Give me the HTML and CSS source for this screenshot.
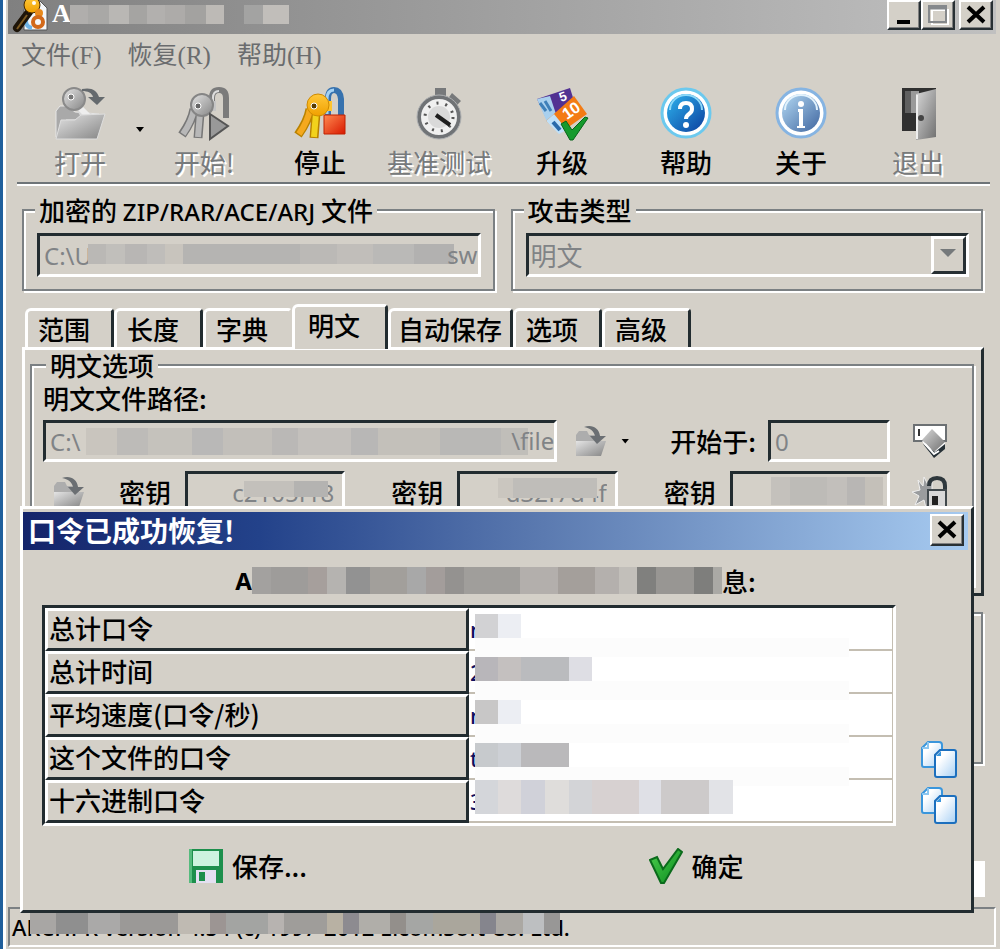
FILE: index.html
```html
<!DOCTYPE html>
<html lang="zh-CN">
<head>
    <meta charset="UTF-8">
    <meta name="viewport" content="width=device-width, initial-scale=1.0">
    <link rel="stylesheet" href="styles.css">
    <title>口令已成功恢复!</title>
</head>
<body>

<!-- shared icons and gradients -->
<svg class="defs" width="0" height="0" aria-hidden="true">
    <defs>
        <linearGradient id="grey" x1="0" y1="0" x2="1" y2="1"><stop offset="0" stop-color="#e4e4e4"/><stop offset="1" stop-color="#858585"/></linearGradient>
        <linearGradient id="gold" x1="0" y1="0" x2="0" y2="1"><stop offset="0" stop-color="#ffc83a"/><stop offset="1" stop-color="#f0a000"/></linearGradient>
        <linearGradient id="red" x1="0" y1="0" x2="1" y2="1"><stop offset="0" stop-color="#ff8a50"/><stop offset="1" stop-color="#d81800"/></linearGradient>
        <linearGradient id="help" x1="0" y1="0" x2="1" y2="1"><stop offset="0" stop-color="#2fb4ee"/><stop offset="1" stop-color="#0b3f9e"/></linearGradient>
        <linearGradient id="about" x1="0" y1="0" x2="1" y2="1"><stop offset="0" stop-color="#b4daf4"/><stop offset="1" stop-color="#3f659f"/></linearGradient>
        <linearGradient id="sheet" x1="0" y1="0" x2="1" y2="1"><stop offset="0.3" stop-color="#ffffff"/><stop offset="1" stop-color="#a8d0f4"/></linearGradient>
        <linearGradient id="door" x1="0" y1="0" x2="1" y2="1"><stop offset="0" stop-color="#d8d8d8"/><stop offset="1" stop-color="#707070"/></linearGradient>
        <linearGradient id="green" x1="0" y1="0" x2="1" y2="1"><stop offset="0" stop-color="#4cd04c"/><stop offset="1" stop-color="#0a8a20"/></linearGradient>
        <symbol id="folder" viewBox="0 0 32 32">
            <path d="M1 10l3-4h8l2 4h11v6H8L2 29H1z" fill="#adadad"/>
            <path d="M1 16h30l-5 15H1z" fill="url(#grey)"/>
            <path d="M9 2c8-3 15 1 16 9h6l-9 8-7-8h5c-1-5-5-8-11-9z" fill="#6b6f73"/>
        </symbol>
        <symbol id="copy" viewBox="0 0 38 38">
            <path d="M8 2h11q3 0 3 3v20q0 2-2 2H4q-2 0-2-2V8z" fill="url(#sheet)" stroke="#3a96dc" stroke-width="2"/>
            <path d="M8 2v6H2" fill="none" stroke="#8cc6f0" stroke-width="2"/>
            <path d="M20 10h14q2 0 2 2v23q0 2-2 2H17q-2 0-2-2V15z" fill="url(#sheet)" stroke="#1c6fbe" stroke-width="2"/>
            <path d="M21 11v5h-5z" fill="#3a96dc"/>
        </symbol>
    </defs>
</svg>

<div class="window">
    <div class="titlebar">
        <svg class="app-icon" width="36" height="34" viewBox="0 0 36 34">
            <path d="M16 1h12l7 7v22H12V10z" fill="#f4f7fa" stroke="#555" stroke-width="1"/>
            <path d="M15 17c-2 5-1 10 5 11" fill="none" stroke="#6fb4e6" stroke-width="4"/>
            <path d="M17 12L5 28" stroke="#1d1408" stroke-width="8" stroke-linecap="round"/>
            <path d="M15 15L5 29" stroke="#7c5a22" stroke-width="2"/>
            <circle cx="20" cy="5" r="8" fill="url(#gold)" stroke="#4a2c00"/>
            <circle cx="22" cy="3" r="2" fill="#fff"/>
            <circle cx="27" cy="13" r="4" fill="#e88a1c"/>
            <circle cx="26" cy="22" r="5" fill="none" stroke="#d2691a" stroke-width="4"/>
        </svg>
        <span class="app-name">A</span>
        <span class="mosaic mosaic-title"></span>
        <span class="mosaic mosaic-title-end"></span>
        <div class="window-buttons">
            <button class="win-btn" aria-label="最小化"><svg width="24" height="20" viewBox="0 0 24 20"><path d="M5 15h13v4H5z"/></svg></button>
            <button class="win-btn" aria-label="最大化" disabled><svg width="24" height="20" viewBox="0 0 24 20"><path d="M4 3h16v15H4z" fill="none" stroke="#fff" stroke-width="2" transform="translate(2 2)"/><path d="M3 1h17v16H3z" fill="none" stroke="#85888b" stroke-width="2"/><path d="M2 3h19" stroke="#85888b" stroke-width="3"/></svg></button>
            <button class="win-btn close" aria-label="关闭"><svg width="24" height="20" viewBox="0 0 24 20"><path d="M4 2l16 15M20 2L4 17" stroke="#000" stroke-width="4"/></svg></button>
        </div>
    </div>

    <nav class="menu">
        <a href="#">文件(F)</a>
        <a href="#">恢复(R)</a>
        <a href="#">帮助(H)</a>
    </nav>

    <div class="toolbar">
        <button class="tool" disabled>
            <svg width="52" height="54" viewBox="0 0 52 54">
                <path d="M2 24l4-5h7l8 6 24 2v6H12L4 50H2z" fill="#a9a9a9" stroke="#e6e6e6"/>
                <path d="M20 18l20 14h-12z" fill="#d8d8d8"/>
                <path d="M24 19l14 14" stroke="#eee" stroke-width="6"/>
                <path d="M7 33h14l6-5 24-1-8 25H2z" fill="url(#grey)" stroke="#dedede"/>
                <circle cx="20" cy="12" r="11" fill="url(#grey)" stroke="#8a8a8a" stroke-width="2"/>
                <circle cx="17" cy="10" r="3" fill="#777" stroke="#fff"/>
                <path d="M28 2c9-2 15 1 17 8h6l-8 8-9-8h5c-1-4-5-6-11-6z" fill="#656a6e"/>
            </svg>
            <span>打开</span>
        </button>
        <button class="drop" aria-label="打开列表"></button>
        <button class="tool" disabled>
            <svg width="52" height="54" viewBox="0 0 52 54">
                <path d="M34 22V11q0-8 7-8t7 8v20" fill="none" stroke="#7b7b7b" stroke-width="6"/>
                <path d="M35 22V11q0-7 6-7" fill="none" stroke="#ddd" stroke-width="2"/>
                <path d="M16 22q-2 12-12 26M22 26l-2 25" fill="none" stroke="#777" stroke-width="9"/>
                <path d="M16 22q-2 12-11 25M22 26l-2 24" fill="none" stroke="#b8b8b8" stroke-width="6"/>
                <path d="M24 14h14v10H24z" fill="#c5c5c5"/>
                <circle cx="24" cy="18" r="11" fill="url(#grey)" stroke="#858585" stroke-width="2"/>
                <circle cx="20" cy="19" r="3" fill="#666" stroke="#fff"/>
                <path d="M32 27l18 12-18 13z" fill="#999" stroke="#555" stroke-width="2"/>
            </svg>
            <span>开始!</span>
        </button>
        <button class="tool">
            <svg width="52" height="54" viewBox="0 0 52 54">
                <path d="M34 30V12q0-9 6-9t7 9v18" fill="none" stroke="#3772ae" stroke-width="6"/>
                <path d="M33 27V12q0-9 7-9" fill="none" stroke="#a5d2f4" stroke-width="3"/>
                <path d="M16 22q-2 12-12 26M22 26l-2 25" fill="none" stroke="#b98200" stroke-width="9"/>
                <path d="M16 22q-2 12-11 25" fill="none" stroke="#f5a91e" stroke-width="6"/>
                <path d="M22 26l-2 24" stroke="#f2d21c" stroke-width="6"/>
                <path d="M24 14h14v10H24z" fill="#ffc530"/>
                <circle cx="24" cy="18" r="11" fill="url(#gold)" stroke="#cf8a00"/>
                <circle cx="20" cy="19" r="3" fill="#5a3c00" stroke="#fff"/>
                <path d="M30 28h21v19H30z" fill="url(#red)" stroke="#c02000" stroke-width="1"/>
            </svg>
            <span>停止</span>
        </button>
        <button class="tool" disabled>
            <svg width="52" height="54" viewBox="0 0 52 54">
                <path d="M22 1h11v8H22zM39 6l9 8-6 6-8-7z" fill="#77797b"/>
                <circle cx="26" cy="30" r="20" fill="#f0f0f0" stroke="#707376" stroke-width="4"/>
                <circle cx="26" cy="30" r="22" fill="none" stroke="#aeb0b2" stroke-width="1"/>
                <circle cx="26" cy="30" r="14" fill="none" stroke="#555" stroke-width="3" stroke-dasharray="2 7"/>
                <circle cx="26" cy="30" r="11" fill="#d9d9d9"/>
                <path d="M23 28l14 10" stroke="#1e1e1e" stroke-width="4"/>
            </svg>
            <span>基准测试</span>
        </button>
        <button class="tool">
            <svg width="54" height="54" viewBox="0 0 54 54">
                <path d="M2 12L35 1l6 19L12 33z" fill="#523192"/>
                <path d="M2 12l13-3 6 18-9 8z" fill="#a9d0ee"/>
                <path d="M5 16l6 8M10 14l6 10" stroke="#3e7fb8" stroke-width="3"/>
                <path d="M11 34L39 9l13 18-27 19z" fill="#f37b14"/>
                <path d="M11 34l8-7 13 16-8 4z" fill="#bfe0f8"/>
                <path d="M18 35l7 8" stroke="#2869aa" stroke-width="4"/>
                <text class="note" transform="translate(26 15) rotate(-20)" font-size="13">5</text>
                <text class="note" transform="translate(32 33) rotate(-35)" font-size="16">10</text>
                <path d="M26 37l5-3 6 9 13-13 3 1-15 22h-3z" fill="#159a2d" stroke="#07641a"/>
            </svg>
            <span>升级</span>
        </button>
        <button class="tool">
            <svg width="52" height="54" viewBox="0 0 52 54">
                <circle cx="26" cy="26" r="24" fill="#fff" stroke="#6cc9ee" stroke-width="3"/>
                <circle cx="26" cy="26" r="19" fill="url(#help)"/>
                <path d="M10 23a16 15 0 0 1 32 0" fill="none" stroke="#8cd8f8" stroke-width="2"/>
                <path d="M20 22q0-6 6-6t6 6q0 3-3 5t-3 5" fill="none" stroke="#fff" stroke-width="4"/>
                <circle cx="26" cy="38" r="3" fill="#fff"/>
            </svg>
            <span>帮助</span>
        </button>
        <button class="tool">
            <svg width="52" height="54" viewBox="0 0 52 54">
                <circle cx="26" cy="26" r="24" fill="#fff" stroke="#86b4e2" stroke-width="3"/>
                <circle cx="26" cy="26" r="19" fill="url(#about)"/>
                <path d="M10 23a16 15 0 0 1 32 0" fill="none" stroke="#e2f2fc" stroke-width="2"/>
                <circle cx="26" cy="17" r="3" fill="#fff"/>
                <path d="M23 22h5v17h2v2h-8v-2h2V25h-1z" fill="#fff"/>
            </svg>
            <span>关于</span>
        </button>
        <button class="tool" disabled>
            <svg width="52" height="54" viewBox="0 0 52 54">
                <path d="M10 1h34v43H10z" fill="#303030"/>
                <path d="M13 4h14v22H13z" fill="#999"/>
                <path d="M13 4h6v22h-6z" fill="#606060"/>
                <path d="M24 7l20-5v48l-20 3z" fill="url(#door)"/>
                <path d="M25 8v44" stroke="#eee" stroke-width="2"/>
                <circle cx="29" cy="31" r="3" fill="#444"/>
            </svg>
            <span>退出</span>
        </button>
    </div>

    <div class="top-groups">
        <fieldset>
            <legend><label for="archive">加密的 <span class="latin">ZIP/RAR/ACE/ARJ</span> 文件</label></legend>
            <div class="field">
                <input id="archive" type="text" value="C:\U" disabled>
                <span class="mosaic mosaic-archive"></span>
                <span class="tail">sw</span>
            </div>
        </fieldset>
        <fieldset>
            <legend><label for="attack">攻击类型</label></legend>
            <div class="field">
                <select id="attack" disabled>
                    <option>明文</option>
                </select>
                <span class="select-arrow"></span>
            </div>
        </fieldset>
    </div>

    <div class="tabs" role="tablist">
        <button class="tab" role="tab">范围</button>
        <button class="tab" role="tab">长度</button>
        <button class="tab before-active" role="tab">字典</button>
        <button class="tab active" role="tab" aria-selected="true">明文</button>
        <button class="tab long" role="tab">自动保存</button>
        <button class="tab" role="tab">选项</button>
        <button class="tab" role="tab">高级</button>
    </div>

    <div class="panel">
        <fieldset>
            <legend>明文选项</legend>
            <label class="path-label" for="path">明文文件路径:</label>
            <div class="row">
                <div class="field path">
                    <input id="path" type="text" value="C:\" disabled>
                    <span class="mosaic mosaic-path"></span>
                    <span class="tail">\file</span>
                </div>
                <button class="icon-btn browse" aria-label="浏览" disabled><svg width="32" height="32"><use href="#folder"/></svg></button>
                <button class="drop" aria-label="路径列表"></button>
                <label class="start-label" for="start">开始于:</label>
                <div class="field start"><input id="start" type="text" value="0" disabled></div>
                <button class="icon-btn side" aria-label="清除">
                    <svg width="36" height="36" viewBox="0 0 36 36">
                        <path d="M2 2h32v16H2z" fill="#fff" stroke="#6c7073" stroke-width="2"/>
                        <path d="M7 6v7" stroke="#333" stroke-width="2"/>
                        <path d="M10 18l10 15 13-8v-6z" fill="#fff"/>
                        <path d="M10 17L20 6l13 13-11 10z" fill="url(#door)"/>
                        <path d="M11 21l11 14 11-9v-5l-10 8z" fill="#263036"/>
                        <path d="M13 21l9 10 5-3" fill="none" stroke="#fff" stroke-width="2"/>
                    </svg>
                </button>
            </div>
            <div class="row">
                <button class="icon-btn load" aria-label="载入密钥" disabled><svg width="32" height="32"><use href="#folder"/></svg></button>
                <label class="key-label" for="key0">密钥</label>
                <div class="field key"><input id="key0" type="text" value="c2105f18" disabled><span class="mosaic mosaic-key0"></span></div>
                <label class="key-label next" for="key1">密钥</label>
                <div class="field key"><input id="key1" type="text" value="d32f7d4f" disabled><span class="mosaic mosaic-key1"></span></div>
                <label class="key-label next" for="key2">密钥</label>
                <div class="field key"><input id="key2" type="text" disabled><span class="mosaic mosaic-key2"></span></div>
                <button class="icon-btn side" aria-label="解锁">
                    <svg width="36" height="36" viewBox="0 0 36 36">
                        <path d="M6 6l5 6 1-9 4 8 4-3v20l-6 6-2-8-9 5 4-9-7-4 8-2z" fill="#9a9c9e" stroke="#efefef"/>
                        <path d="M17 12q0-8 8-8t8 8v7" fill="none" stroke="#2e373c" stroke-width="4"/>
                        <path d="M16 16h18v19H16z" fill="#d8d8d8" stroke="#40484c" stroke-width="2"/>
                        <path d="M20 22h6v9h-6z" fill="#222"/>
                    </svg>
                </button>
            </div>
        </fieldset>
    </div>

    <div class="log-group"></div>
    <div class="progress"></div>

    <div class="status">
        <span>ARCHPR version 4.54 (c) 1997-2012 ElcomSoft Co. Ltd.</span>
        <span class="mosaic mosaic-status"></span>
    </div>

    <div class="dialog" role="dialog" aria-labelledby="dialog-title">
        <div class="dialog-title">
            <span id="dialog-title">口令已成功恢复!</span>
            <button class="win-btn" aria-label="关闭"><svg width="24" height="20" viewBox="0 0 24 20"><path d="M4 2l16 15M20 2L4 17" stroke="#000" stroke-width="4"/></svg></button>
        </div>
        <p class="dialog-head"><b>A</b><span class="mosaic mosaic-head"></span>息:</p>
        <div class="result">
            <table>
                <tr><th scope="row">总计口令</th><td>n<span class="mosaic value-1"></span></td></tr>
                <tr><th scope="row">总计时间</th><td>2<span class="mosaic value-2"></span></td></tr>
                <tr><th scope="row">平均速度(口令/秒)</th><td>n<span class="mosaic value-3"></span></td></tr>
                <tr><th scope="row">这个文件的口令</th><td>t<span class="mosaic value-4"></span></td></tr>
                <tr><th scope="row">十六进制口令</th><td>3<span class="mosaic value-5"></span></td></tr>
            </table>
            <div class="copy-buttons">
                <button class="icon-btn" aria-label="复制口令"><svg width="38" height="38"><use href="#copy"/></svg></button>
                <button class="icon-btn" aria-label="复制十六进制口令"><svg width="38" height="38"><use href="#copy"/></svg></button>
            </div>
        </div>
        <div class="dialog-actions">
            <button class="action">
                <svg width="36" height="36" viewBox="0 0 36 36">
                    <path d="M1 1h34v34H1z" fill="#1d8f4c"/>
                    <path d="M1 1h3v34H1z" fill="#55bb7d"/>
                    <path d="M5 3h26v15H5z" fill="#cdf3df"/>
                    <path d="M8 22h20v13H8z" fill="#e4e0f2"/>
                    <path d="M11 24h6v9h-6z" fill="#1d8f4c"/>
                </svg>
                保存...
            </button>
            <button class="action">
                <svg width="34" height="36" viewBox="0 0 34 36">
                    <path d="M1 12l7-3 6 12L29 1l4 3-18 31h-3z" fill="url(#green)" stroke="#0b6b1c" stroke-width="2"/>
                </svg>
                确定
            </button>
        </div>
    </div>
</div>

</body>
</html>
```
FILE: styles.css
```css
* {
    box-sizing: border-box;
}

body {
    margin: 0;
    background: #d4d0c8;
    color: #000;
    font-family: "Noto Sans CJK SC", sans-serif;
    font-size: 26px;
    font-weight: 500;
    line-height: 30px;
}

button, input, select {
    font: inherit;
    color: inherit;
    margin: 0;
    padding: 0;
    border: none;
    border-radius: 0;
    background: none;
}

svg {
    display: block;
    flex: none;
}

.defs {
    position: absolute;
}

.window {
    position: relative;
    display: flex;
    flex-direction: column;
    min-height: 100vh;
    border-left: 3px solid #1f5f9c;
    box-shadow: inset 3px 0 0 #fff;
    padding: 0 4px 2px 5px;
    overflow: hidden;
}

/* title bar */
.titlebar {
    display: flex;
    align-items: flex-start;
    height: 34px;
    padding-left: 4px;
    background: linear-gradient(to right, #808080, #c0c0c0);
}

.app-name {
    width: 18px;
    margin-left: 4px;
    color: #fff;
    font-family: "Liberation Serif", serif;
    font-weight: bold;
    line-height: 28px;
}

.window-buttons {
    display: flex;
    margin-left: auto;
    padding-right: 3px;
}

.win-btn {
    width: 34px;
    height: 30px;
    padding: 2px 3px;
    background: #d4d0c8;
    border: 2px solid;
    border-color: #fff #283034 #283034 #fff;
    box-shadow: inset -1px -1px 0 #808080;
}

.win-btn.close {
    margin-left: 4px;
}

.mosaic {
    display: block;
    flex: none;
}

.mosaic-title {
    width: 154px;
    height: 19px;
    margin-top: 5px;
    background: linear-gradient(to right, #b0aeac 12%, #a9a8a6 12% 25%, #b9b7b4 25% 38%, #a5a4a2 38% 50%, #b2b0ae 50% 62%, #adaba9 62% 75%, #a3a2a0 75% 88%, #bdbab6 88%);
}

.mosaic-title-end {
    width: 45px;
    height: 19px;
    margin: 5px 0 0 20px;
    background: linear-gradient(to right, #a3a3a2 42%, #c1beba 42%);
}

/* menu */
.menu {
    display: flex;
    gap: 26px;
    height: 42px;
    padding: 7px 13px;
    font-family: "Liberation Serif", "Noto Sans CJK SC", serif;
    font-size: 25px;
    font-weight: 400;
}

.menu a {
    color: #6a6c6e;
    text-decoration: none;
}

/* toolbar */
.toolbar {
    display: grid;
    grid-template-columns: 112fr 8fr 120fr 112fr 126fr 120fr 128fr 102fr 132fr;
    margin: 0 6px 0 9px;
    padding: 11px 6px 5px 7px;
    border-bottom: 2px solid #6e7478;
    box-shadow: 0 2px 0 #fff;
}

.tool {
    display: flex;
    flex-direction: column;
    align-items: center;
    gap: 6px;
    white-space: nowrap;
}

.tool:disabled {
    color: #777a7c;
    font-weight: 400;
    text-shadow: 2px 2px 0 #fff;
}

.note {
    fill: #fff;
    font-family: "Liberation Sans", sans-serif;
    font-weight: bold;
}

.drop {
    align-self: center;
    width: 8px;
    height: 5px;
    background: #000;
    clip-path: polygon(0 0, 100% 0, 50% 100%);
}

.toolbar .drop {
    margin-bottom: 5px;
}

/* group boxes */
fieldset {
    min-width: 0;
    margin: 0;
    border: 2px solid #7b8083;
    box-shadow: 2px 2px 0 #fff, inset 2px 2px 0 #fff;
}

legend {
    padding: 0 4px;
    background: #d4d0c8;
}

.latin {
    font-family: "Noto Sans", sans-serif;
    font-size: 24px;
    line-height: 1;
}

.top-groups {
    display: grid;
    grid-template-columns: 1fr 1fr;
    gap: 16px;
    margin: 11px 13px 0 14px;
}

.top-groups fieldset {
    padding: 8px 12px 12px 13px;
}

.top-groups legend {
    margin-left: -2px;
}

.field {
    position: relative;
    display: flex;
    align-items: center;
    height: 44px;
    border: 3px solid;
    border-color: #222c30 #fff #fff #222c30;
    color: #808386;
    font-weight: 400;
}

.field input {
    width: 100%;
    height: 100%;
    padding: 0 4px;
    font-family: "Noto Sans", sans-serif;
    font-size: 24px;
}

.field select {
    appearance: none;
    width: 100%;
    height: 100%;
    padding: 0 2px;
    opacity: 1;
}

.field .mosaic,
.tail {
    position: absolute;
}

.tail {
    right: 0;
    font-family: "Noto Sans", sans-serif;
    font-size: 24px;
}

.mosaic-archive {
    left: 48px;
    right: 24px;
    top: 8px;
    height: 20px;
    background: linear-gradient(to right, #bab8b5 5%, #c1bfbb 5% 10%, #b8b6b4 10% 16%, #bfbdba 16% 21%, #c8c4bd 21% 26%, #b5b4b2 26% 58%, #bbb9b6 58% 68%, #c1beba 68% 78%, #bab9b7 78% 89%, #b2b1b0 89%);
}

.select-arrow {
    position: absolute;
    right: 0;
    top: 0;
    width: 35px;
    height: 38px;
    border: 3px solid;
    border-color: #fff #283034 #283034 #fff;
    background: #d4d0c8;
}

.select-arrow::after {
    content: "";
    display: block;
    width: 16px;
    height: 8px;
    margin: 10px 0 0 6px;
    background: #75797b;
    clip-path: polygon(0 0, 100% 0, 50% 100%);
}

/* tabs */
.tabs {
    display: flex;
    align-items: flex-end;
    margin: 13px 13px 0 17px;
}

.tab {
    width: 89px;
    height: 39px;
    padding: 0 10px;
    border: 3px solid;
    border-color: #fff #222c30 transparent #fff;
    border-bottom-width: 0;
    border-top-left-radius: 6px;
    border-top-right-radius: 4px;
    text-align: left;
    white-space: nowrap;
}

.tab.before-active {
    border-right-color: transparent;
}

.tab.active {
    position: relative;
    width: 96px;
    height: 45px;
    margin-bottom: -2px;
    padding: 0 13px 7px;
    background: #d4d0c8;
}

.tab.long {
    width: 125px;
    padding: 0 7px;
}

.panel {
    height: 249px;
    margin: 0 12px 0 14px;
    padding: 0 7px 0 5px;
    border: 3px solid;
    border-color: #fff #222c30 #222c30 #fff;
}

.panel fieldset {
    height: 236px;
    padding: 3px 24px 0 11px;
}

.panel legend {
    margin-left: 3px;
}

.path-label {
    display: block;
    margin-bottom: 7px;
}

.row {
    display: flex;
    align-items: center;
    margin-bottom: 9px;
}

.row .field {
    height: 42px;
}

.row label {
    white-space: nowrap;
}

.path {
    flex: 1;
}

.mosaic-path {
    left: 40px;
    right: 26px;
    top: 5px;
    height: 27px;
    background: linear-gradient(to right, #c9c5be 7%, #bdbbb8 7% 14%, #c5c2bc 14% 24%, #b9b8b7 24% 31%, #c2bfba 31% 42%, #bab8b6 42% 48%, #c3c0bc 48% 60%, #b8b7b6 60% 66%, #c3c0ba 66% 80%, #b9b8b6 80% 94%, #c0beb9 94%);
}

.browse {
    margin: 0 14px 0 18px;
}

.row .drop {
    margin-right: 41px;
}

.start-label {
    margin-right: 12px;
}

.start {
    width: 122px;
}

.icon-btn.side {
    margin-left: 22px;
}

.load {
    margin: 0 34px 0 10px;
}

.key-label {
    margin-right: 14px;
}

.key-label.next {
    margin-left: 46px;
}

.key {
    flex: 1;
}

.key input {
    padding-right: 8px;
    text-align: right;
}

.mosaic-key0 {
    left: 56px;
    right: 14px;
    top: 7px;
    height: 16px;
    background: linear-gradient(to right, #c3c0bb 60%, #b4b3b1 60%);
}

.mosaic-key1 {
    left: 38px;
    right: 18px;
    top: 4px;
    height: 20px;
    background: linear-gradient(to right, #cac6bf 15%, #bfbdb9 15%);
}

.mosaic-key2 {
    left: 38px;
    right: 4px;
    top: 3px;
    height: 28px;
    background: linear-gradient(to right, #c4c1bc 17%, #bdbbb7 17% 50%, #c2bfbb 50% 68%, #b8b6b4 68% 84%, #c4c0b9 84%);
}

.log-group {
    height: 152px;
    margin: 16px 13px 0 14px;
    border: 2px solid #7b8083;
    box-shadow: 2px 2px 0 #fff, inset 2px 2px 0 #fff;
}

.progress {
    height: 36px;
    margin: 97px 11px 0 14px;
    background: #fff;
}

.status {
    position: relative;
    height: 40px;
    margin-top: auto;
    padding: 4px 2px;
    border: 2px solid;
    border-color: #7b8083 #fff #fff #7b8083;
    font-family: "Noto Sans", sans-serif;
    font-size: 22px;
    line-height: 28px;
    white-space: nowrap;
}

.mosaic-status {
    position: absolute;
    left: 20px;
    top: 4px;
    width: 530px;
    height: 21px;
    background: linear-gradient(to right, #a8a6a4 5%, #8f8f8f 5% 11%, #aaa9a8 11% 17%, #9b9997 17% 28%, #bfbab2 28% 34%, #9c9593 34% 37%, #a3a4a2 37% 45%, #b7b3b0 45% 48%, #9f9d9a 48% 56%, #b8b1a3 56% 59%, #8d8b90 59% 62%, #b0aea9 62% 68%, #938f8b 68% 71%, #a5a6a4 71% 76%, #aaa69c 76% 85%, #85858d 85% 88%, #aba8a3 88% 93%, #bdbfc1 93% 97%, #989796 97%);
}

/* dialog */
.dialog {
    position: absolute;
    top: 506px;
    left: 17px;
    right: 26px;
    padding: 3px 3px 26px 0;
    background: #d4d0c8;
    border: 3px solid;
    border-color: #fff #222c30 #222c30 #fff;
}

.dialog-title {
    display: flex;
    align-items: center;
    justify-content: space-between;
    height: 38px;
    padding: 0 4px 2px 5px;
    background: linear-gradient(to right, #14246a, #23428a 25%, #5b7ab0 55%, #a6caf0);
    color: #fff;
    font-size: 28px;
    font-weight: bold;
}

.dialog-title .win-btn {
    height: 32px;
}

.dialog-head {
    display: flex;
    justify-content: center;
    margin: 16px 0 9px;
}

.dialog-head b {
    font-family: "Noto Sans", sans-serif;
    font-size: 24px;
}

.mosaic-head {
    width: 470px;
    height: 27px;
    margin-top: 1px;
    background: linear-gradient(to right, #a3a19f 4%, #9e9c9a 4% 12%, #a69f9c 12% 16%, #b5b3b0 16% 20%, #929292 20% 25%, #a29f9b 25% 33%, #a8a8a8 33% 37%, #a39d9b 37% 41%, #949290 41% 45%, #a09e9b 45% 57%, #b3afac 57% 65%, #a49f9b 65% 73%, #b4b0ad 73% 78%, #c2bfba 78% 82%, #80807e 82% 86%, #989693 86% 94%, #7e7e7c 94% 98%, #aaa9a5 98%);
}

.result {
    display: flex;
    align-items: flex-end;
    gap: 24px;
    padding: 0 10px 0 19px;
}

table {
    flex: 1;
    table-layout: fixed;
    border-collapse: separate;
    border-spacing: 0;
    border: 3px solid;
    border-color: #222c30 #fff #fff #222c30;
    background: #fff;
}

th, td {
    height: 43px;
    text-align: left;
}

th {
    width: 50%;
    background: #d4d0c8;
    border: 3px solid;
    border-color: #fff #222c30 #222c30 #fff;
    padding: 0 1px 4px;
    font-weight: 500;
}

td {
    position: relative;
    padding: 0 1px;
    border-right: 1px solid #c4beb2;
    border-bottom: 2px solid #c4beb2;
    color: #101060;
    font-family: "Noto Sans", sans-serif;
    font-size: 22px;
}

td .mosaic {
    position: absolute;
    left: 6px;
    right: 43px;
    top: 6px;
    height: 43px;
    background-color: #fcfcfc;
    background-repeat: no-repeat;
}

.value-1 {
    background-image: linear-gradient(to right, #d2d2d4 23px, #eceef3 23px 46px, #fff 46px);
    background-size: 100% 24px;
}

.value-2 {
    background-image: linear-gradient(to right, #b8b6ba 23px, #c4c0bf 23px 46px, #babbbe 46px 94px, #dedee4 94px 117px, #fff 117px);
    background-size: 100% 24px;
}

.value-3 {
    background-image: linear-gradient(to right, #c8c7c7 23px, #eceef3 23px 46px, #fff 46px);
    background-size: 100% 24px;
}

.value-4 {
    background-image: linear-gradient(to right, #c7cacd 23px, #cdd0d5 23px 46px, #bab9bb 46px 94px, #fff 94px);
    background-size: 100% 24px;
}

td .value-5 {
    right: auto;
    top: 0;
    width: 258px;
    height: 34px;
    background-image: linear-gradient(to right, #d4d6da 23px, #dedbdb 23px 46px, #d0d1d9 46px 70px, #dfdddb 70px 94px, #d3d4d7 94px 117px, #d7d1d1 117px 164px, #dfe0e6 164px 186px, #cdcaca 186px 234px, #e2e3e7 234px);
}

.copy-buttons {
    display: flex;
    flex-direction: column;
    gap: 8px;
    padding-bottom: 2px;
}

.dialog-actions {
    display: grid;
    grid-template-columns: 1fr 1fr;
    padding: 22px 47px 0 0;
}

.action {
    display: flex;
    align-items: center;
    justify-content: center;
    gap: 8px;
}
```
